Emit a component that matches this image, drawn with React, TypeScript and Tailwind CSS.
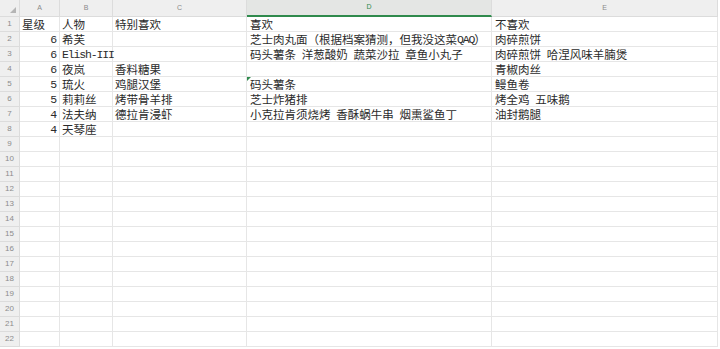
import React from "react";

const cols = ["A", "B", "C", "D", "E"];

const data: string[][] = [
  ["星级", "人物", "特别喜欢", "喜欢", "不喜欢"],
  ["6", "希芙", "", "芝士肉丸面（根据档案猜测，但我没这菜QAQ）", "肉碎煎饼"],
  ["6", "Elish-III", "", "码头薯条 洋葱酸奶 蔬菜沙拉 章鱼小丸子", "肉碎煎饼 哈涅风味羊腩煲"],
  ["6", "夜岚", "香料糖果", "", "青椒肉丝"],
  ["5", "琉火", "鸡腿汉堡", "码头薯条", "鳗鱼卷"],
  ["5", "莉莉丝", "烤带骨羊排", "芝士炸猪排", "烤全鸡 五味鹅"],
  ["4", "法夫纳", "德拉肯浸虾", "小克拉肯须烧烤 香酥蜗牛串 烟熏鲨鱼丁", "油封鹅腿"],
  ["4", "天琴座", "", "", ""],
];

const ROWS = 22;

function Rich({ text }: { text: string }) {
  const parts = text.match(/[\x00-\x7f]+|[^\x00-\x7f]+/g) || [];
  return (
    <>
      {parts.map((p, i) =>
        /^[\x00-\x7f]+$/.test(p) ? (
          <span
            key={i}
            className="whitespace-pre tracking-[-1.15px] [font-family:'Liberation_Mono',monospace]"
          >
            {p}
          </span>
        ) : (
          <span key={i}>{p}</span>
        )
      )}
    </>
  );
}

export default function App() {
  const rows = Array.from({ length: ROWS }, (_, i) => i);
  return (
    <div className="w-[720px] h-[349px] bg-white overflow-hidden">
      <div className="grid grid-cols-[20px_40px_53px_134px_245px_226px] grid-rows-[17px] auto-rows-[15px] text-[11.5px] text-[#2b2b2b] [font-family:'Noto_Sans_CJK_SC','Noto_Sans_CJK_SC',sans-serif]">
        {/* header row */}
        <div className="bg-[#efefef] border-r border-b border-[#dcdcdc] flex items-end justify-end pr-[3px] pb-[3px]">
          <svg width="6" height="6" viewBox="0 0 6 6">
            <polygon points="6,0 6,6 0,6" fill="#b5b5b5" />
          </svg>
        </div>
        {cols.map((c) => (
          <div
            key={c}
            className={
              c === "D"
                ? "bg-[#e4e6e4] border-r border-b-2 border-r-[#dcdcdc] border-b-[#2f8a4c] flex items-center justify-center text-[7px] text-[#2f8a4c] [font-family:'Liberation_Sans',sans-serif]"
                : "bg-[#efefef] border-r border-b border-[#dcdcdc] flex items-center justify-center text-[7px] text-[#8a8a8a] [font-family:'Liberation_Sans',sans-serif]"
            }
          >
            {c}
          </div>
        ))}
        {rows.map((r) => {
          const row = data[r] || ["", "", "", "", ""];
          return (
            <React.Fragment key={r}>
              <div className="bg-[#efefef] border-r border-b border-[#dcdcdc] flex items-center justify-center text-[8px] text-[#8c8c8c] [font-family:'Liberation_Sans',sans-serif]">
                {r + 1}
              </div>
              {row.map((v, ci) => {
                const numeric = ci === 0 && /^\d+$/.test(v);
                return (
                  <div
                    key={ci}
                    className={
                      "relative border-r border-b border-[#e6e6e6] flex items-center whitespace-nowrap leading-[15px] " +
                      (numeric ? "justify-end pr-[3px]" : ci >= 3 ? "pl-[3px]" : "pl-[2px]")
                    }
                  >
                    {r === 4 && ci === 3 && (
                      <svg className="absolute left-0 top-0" width="4" height="4" viewBox="0 0 4 4">
                        <polygon points="0,0 4,0 0,4" fill="#2f8a4c" />
                      </svg>
                    )}
                    <Rich text={v} />
                  </div>
                );
              })}
            </React.Fragment>
          );
        })}
      </div>
    </div>
  );
}
